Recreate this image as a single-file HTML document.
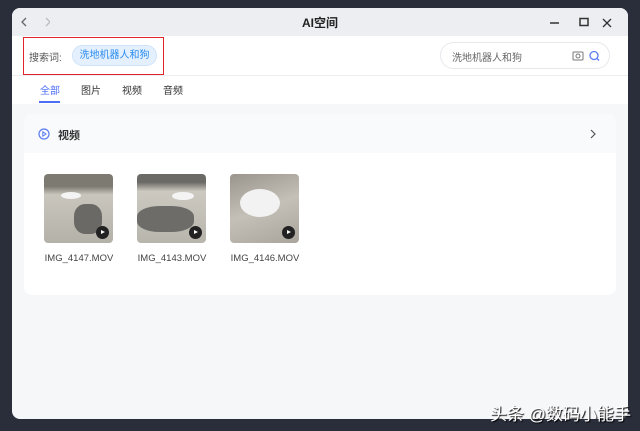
<!DOCTYPE html>
<html><head><meta charset="utf-8"><style>
*{margin:0;padding:0;box-sizing:border-box}
body{width:640px;height:431px;overflow:hidden;background:#2a2e3b;font-family:"Liberation Sans","Noto Sans CJK SC",sans-serif;position:relative}
.win{position:absolute;left:12px;top:8px;width:616px;height:411px;background:#f6f7f9;border-radius:8px;overflow:hidden}
.title{height:28px;background:#eceef2;position:relative}
.title .t{position:absolute;left:0;right:0;top:6px;text-align:center;font-size:12px;color:#222;font-weight:bold}
.hdr{position:absolute;top:28px;left:0;right:0;height:40px;background:#fff;border-bottom:1px solid #eceef1}
.tabs{position:absolute;top:68px;left:0;right:0;height:28px;background:#fff;font-size:10px;color:#333}
.tabs span{position:absolute;top:6px}
.card{position:absolute;left:12px;top:106px;width:592px;height:181px;background:#fff;border-radius:8px;overflow:hidden}
.ch{height:39px;background:#f9fafb;position:relative}
.th{position:absolute;top:166px;width:69px;height:69px;border-radius:4px;overflow:hidden}
.pl{position:absolute;right:4px;bottom:4px;width:13px;height:13px;border-radius:50%;background:#222}
.pl:after{content:"";position:absolute;left:5px;top:4px;border-left:4px solid #fff;border-top:2.5px solid transparent;border-bottom:2.5px solid transparent}
.nm{position:absolute;top:245px;font-size:9.5px;color:#444;width:90px;text-align:center}
</style></head><body>
<div class="win">
 <div class="title">
  <svg style="position:absolute;left:8px;top:8px" width="30" height="12"><path d="M6 2 L2 6 L6 10" fill="none" stroke="#666" stroke-width="1.3"/><path d="M26 2 L30 6 L26 10" fill="none" stroke="#bbb" stroke-width="1.3"/></svg>
  <div class="t">AI空间</div>
  <svg style="position:absolute;left:538px;top:9px" width="70" height="12"><path d="M0 6H9" stroke="#333" stroke-width="1.5"/><rect x="30" y="1.5" width="8" height="7" fill="none" stroke="#333" stroke-width="1.5"/><path d="M53 2L61 10M61 2L53 10" stroke="#333" stroke-width="1.3"/></svg>
 </div>
 <div class="hdr">
  <div style="position:absolute;left:11px;top:1px;width:141px;height:38px;border:1.5px solid #e0242a"></div>
  <span style="position:absolute;left:17px;top:13px;font-size:10px;color:#555">搜索词:</span>
  <span style="position:absolute;left:60px;top:9px;height:21px;width:85px;border-radius:11px;background:#e4f0fd;border:1px solid #cfe3fa;color:#2a8cf0;font-size:10px;line-height:19px;text-align:center">洗地机器人和狗</span>
  <div style="position:absolute;left:428px;top:6px;width:170px;height:27px;border:1px solid #e6e8ec;border-radius:14px"></div>
  <span style="position:absolute;left:440px;top:13px;font-size:10px;color:#666">洗地机器人和狗</span>
  <svg style="position:absolute;left:560px;top:14px" width="30" height="12"><rect x="1" y="2" width="10" height="8" rx="1" fill="none" stroke="#777"/><circle cx="6" cy="6" r="2" fill="none" stroke="#777"/><circle cx="22" cy="5.5" r="4" fill="none" stroke="#5a7cf2" stroke-width="1.3"/><path d="M25 8.5L27 10.5" stroke="#5a7cf2" stroke-width="1.3"/></svg>
 </div>
 <div class="tabs">
  <span style="left:28px;color:#4b6ef5">全部</span>
  <div style="position:absolute;left:27px;top:25px;width:21px;height:2px;background:#4b6ef5"></div>
  <span style="left:69px">图片</span><span style="left:110px">视频</span><span style="left:151px">音频</span>
 </div>
 <div class="card">
  <div class="ch">
   <svg style="position:absolute;left:14px;top:14px" width="12" height="12"><circle cx="6" cy="6" r="5" fill="none" stroke="#5a7cf2" stroke-width="1.2"/><path d="M4.8 3.8L8 6L4.8 8.2Z" fill="none" stroke="#5a7cf2"/></svg>
   <span style="position:absolute;left:34px;top:13px;font-size:11px;font-weight:bold;color:#333">视频</span>
   <svg style="position:absolute;left:565px;top:15px" width="8" height="10"><path d="M2 1L6 5L2 9" fill="none" stroke="#555" stroke-width="1.2"/></svg>
  </div>
 </div>
 <div class="th" style="left:32px;background:linear-gradient(#7d7a72 0,#7d7a72 18%,#c9c6bd 30%,#b4b1a8 100%)"><div style="position:absolute;left:17px;top:18px;width:20px;height:7px;background:#f4f4f4;border-radius:50%"></div><div style="position:absolute;left:30px;top:30px;width:28px;height:30px;background:#6b6966;border-radius:40%"></div><div class="pl"></div></div>
 <div class="th" style="left:125px;background:linear-gradient(#6c6a66 0,#6c6a66 12%,#ccc9c0 25%,#b8b5ac 100%)"><div style="position:absolute;left:35px;top:18px;width:22px;height:8px;background:#f4f4f4;border-radius:50%"></div><div style="position:absolute;left:0;top:32px;width:57px;height:26px;background:#6e6c69;border-radius:40%"></div><div class="pl"></div></div>
 <div class="th" style="left:218px;background:linear-gradient(160deg,#9a958c,#c4c0b7 50%,#a9a59d)"><div style="position:absolute;left:10px;top:15px;width:40px;height:28px;background:#f2f2f2;border-radius:50%"></div><div class="pl"></div></div>
 <div class="nm" style="left:22px">IMG_4147.MOV</div>
 <div class="nm" style="left:115px">IMG_4143.MOV</div>
 <div class="nm" style="left:208px">IMG_4146.MOV</div>
</div>
<div style="position:absolute;left:490px;top:400px;font-size:17px;color:#fff;text-shadow:1px 1px 1px #000;white-space:nowrap">头条 @数码小能手</div>
</body></html>
